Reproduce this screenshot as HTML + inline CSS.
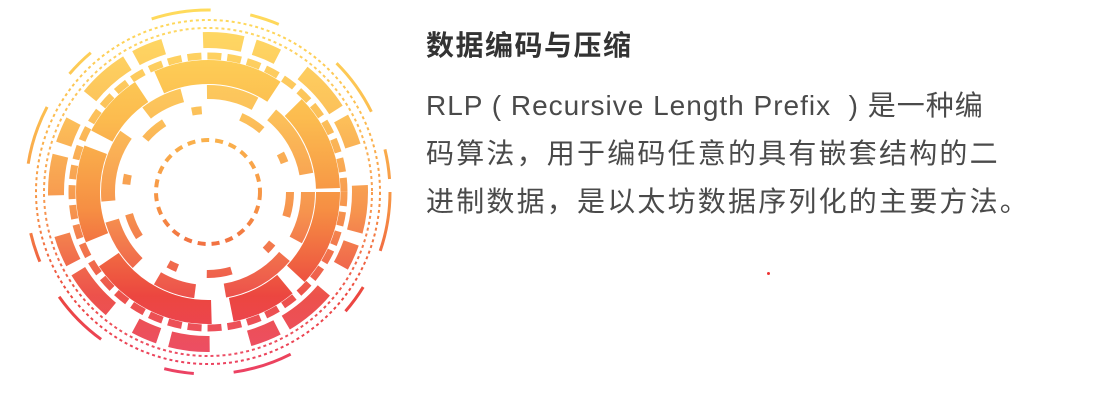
<!DOCTYPE html><html><head><meta charset="utf-8"><style>
body{margin:0;width:1118px;height:400px;background:#fff;overflow:hidden;position:relative;font-family:"Liberation Sans","Noto Sans CJK SC",sans-serif}
.t{position:absolute;left:426px;top:29px;font-size:28px;font-weight:bold;color:#333;line-height:34px;letter-spacing:1.5px}
.b{position:absolute;left:426px;top:82px;font-size:28px;line-height:48px;color:#4a4a4a;width:680px;white-space:nowrap}
.l1{letter-spacing:1px}.l2{letter-spacing:2.2px}
svg{position:absolute;left:0;top:0}
</style></head><body>
<svg width="420" height="400" viewBox="0 0 420 400">
<defs><linearGradient id="g" gradientUnits="userSpaceOnUse" x1="0" y1="-185" x2="0" y2="185">
<stop offset="0" stop-color="#ffd640"/><stop offset="0.3" stop-color="#fbb030"/><stop offset="0.55" stop-color="#f47a22"/><stop offset="0.78" stop-color="#e8261e"/><stop offset="1" stop-color="#e8204a"/></linearGradient></defs>
<g fill="none" stroke="url(#g)" transform="translate(208,192)">
<circle r="182" stroke-width="3" stroke-dasharray="60 40 30 70" opacity=".85"/>
<circle r="172" stroke-width="2" stroke-dasharray="3 3" opacity=".85"/>
<circle r="164" stroke-width="2" stroke-dasharray="3 3" opacity=".8"/>
<circle r="152" stroke-width="16" stroke-dasharray="40 12 25 30 50 10 30 40" opacity=".8"/>
<circle r="136" stroke-width="7" stroke-dasharray="14 6" opacity=".8"/>
<circle r="120" stroke-width="24" stroke-dasharray="90 15 60 20 120 25" opacity=".85"/>
<circle r="100" stroke-width="14" stroke-dasharray="50 20 70 30 40 25" opacity=".8"/>
<circle r="82" stroke-width="8" stroke-dasharray="25 30 10 40" opacity=".8"/>
<circle r="52" stroke-width="4" stroke-dasharray="8 6" opacity=".85"/>
</g></svg>
<div class="t">数据编码与压缩</div>
<div class="b"><span class="l1">RLP ( Recursive Length Prefix&nbsp; ) 是一种编</span><br><span class="l2">码算法，用于编码任意的具有嵌套结构的二</span><br><span class="l2">进制数据，是以太坊数据序列化的主要方法。</span></div>
<div style="position:absolute;left:767px;top:272px;width:3px;height:3px;background:#e33;border-radius:50%"></div>
</body></html>
